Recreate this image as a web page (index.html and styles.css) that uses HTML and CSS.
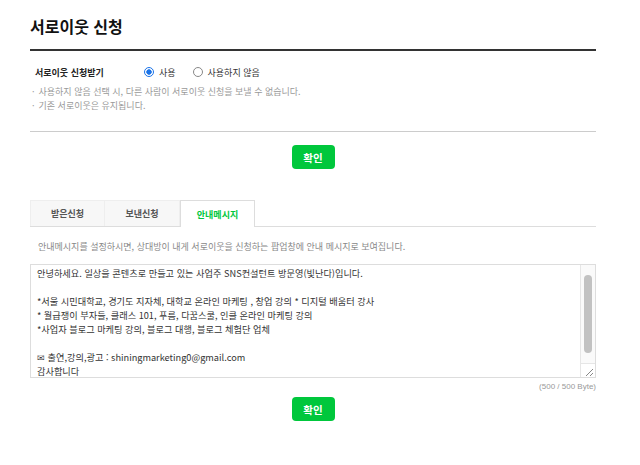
FILE: index.html
```html
<!DOCTYPE html>
<html lang="ko">
<head>
<meta charset="utf-8">
<link rel="stylesheet" href="styles.css">
</head>
<body>
<div class="page">
  <h1 class="title">서로이웃 신청</h1>
  <section class="setting">
    <div class="setting-row">
      <span class="setting-label">서로이웃 신청받기</span>
      <label class="radio"><span class="radio-dot on"></span>사용</label>
      <label class="radio"><span class="radio-dot"></span>사용하지 않음</label>
    </div>
    <ul class="notes">
      <li>사용하지 않음 선택 시, 다른 사람이 서로이웃 신청을 보낼 수 없습니다.</li>
      <li>기존 서로이웃은 유지됩니다.</li>
    </ul>
  </section>
  <div class="btn-area"><button class="btn">확인</button></div>

  <div class="tabs">
    <div class="tab">받은신청</div>
    <div class="tab">보낸신청</div>
    <div class="tab active">안내메시지</div>
  </div>
  <p class="desc">안내메시지를 설정하시면, 상대방이 내게 서로이웃을 신청하는 팝업창에 안내 메시지로 보여집니다.</p>
  <div class="message-box">
    <textarea class="message">안녕하세요. 일상을 콘텐츠로 만들고 있는 사업주 SNS컨설턴트 방문영(빛난다)입니다.

*서울 시민대학교, 경기도 지자체, 대학교 온라인 마케팅 , 창업 강의 * 디지털 배움터 강사
* 월급쟁이 부자들, 클래스 101, 푸름, 다꿈스쿨, 인클 온라인 마케팅 강의
*사업자 블로그 마케팅 강의, 블로그 대행, 블로그 체험단 업체

✉ 출연,강의,광고 : shiningmarketing0@gmail.com
감사합니다



</textarea>
    <div class="scrollbar">
      <div class="scroll-track"><div class="scroll-thumb"></div></div>
      <div class="scroll-corner">
        <svg width="14" height="14" viewBox="0 0 14 14"><path d="M12 5 L5 12 M12 9 L9 12" stroke="#888" stroke-width="1" fill="none"/></svg>
      </div>
    </div>
  </div>
  <div class="bytes">(500 / 500 Byte)</div>
  <div class="btn-area second"><button class="btn">확인</button></div>
</div>
</body>
</html>
```

FILE: styles.css
```css
* { box-sizing: border-box; }
body {
  margin: 0;
  background: #fff;
  font-family: "Noto Sans CJK KR", "Noto Sans", sans-serif;
  color: #222;
}
.page {
  width: 566px;
  margin-left: 30px;
}
.title {
  margin: 0;
  padding-top: 12px;
  height: 51px;
  font-size: 16px;
  line-height: 28px;
  font-weight: 700;
  color: #111;
  border-bottom: 2px solid #333;
}
.setting {
  padding: 13px 0 18px 5px;
  border-bottom: 1px solid #ccc;
}
.setting-row {
  display: flex;
  align-items: center;
  height: 16px;
  font-size: 9px;
}
.setting-label {
  width: 109px;
  font-weight: 700;
  color: #222;
}
.radio {
  display: flex;
  align-items: center;
  color: #333;
  margin-right: 17px;
}
.radio-dot {
  width: 10px;
  height: 10px;
  border: 1px solid #888;
  border-radius: 50%;
  margin-right: 5px;
  background: #fff;
}
.radio-dot.on {
  border: 1.5px solid #1a73e8;
  background: radial-gradient(circle, #1a73e8 0 2.4px, #fff 3px);
}
.notes {
  list-style: none;
  margin: 5px 0 0 -3px;
  padding: 0;
  font-size: 9px;
  line-height: 14px;
  color: #999;
}
.notes li::before {
  content: "·";
  margin-right: 4px;
}
.btn-area {
  display: flex;
  justify-content: center;
  padding-top: 13px;
  height: 68px;
}
.btn-area.second {
  padding-top: 3px;
}
.btn {
  width: 43px;
  height: 24px;
  border: 0;
  border-radius: 4px;
  background: #00c73c;
  color: #fff;
  font-family: inherit;
  font-size: 10.5px;
  font-weight: 700;
  padding: 0;
}
.tabs {
  display: flex;
  height: 27px;
  border-bottom: 1px solid #ddd;
}
.tab {
  width: 75px;
  height: 26px;
  background: #f7f7f7;
  border: 1px solid #eee;
  border-bottom: 0;
  display: flex;
  align-items: center;
  justify-content: center;
  font-size: 9px;
  font-weight: 700;
  color: #555;
}
.tab + .tab { border-left: 0; }
.tab.active {
  background: #fff;
  color: #00c73c;
  border: 1px solid #ddd;
  border-bottom: 0;
  height: 27px;
  margin-bottom: -1px;
}
.desc {
  margin: 0;
  padding: 12px 0 0 8px;
  height: 37px;
  font-size: 9px;
  line-height: 15px;
  color: #888;
}
.message-box {
  position: relative;
}
.message {
  display: block;
  width: 566px;
  height: 114px;
  margin: 0;
  border: 1px solid #ddd;
  padding: 1px 20px 1px 6px;
  font-family: "Noto Sans CJK KR", "Noto Sans", sans-serif;
  font-size: 9.2px;
  line-height: 14px;
  color: #333;
  resize: none;
  overflow-y: auto;
  outline: none;
}
.scrollbar {
  position: absolute;
  top: 1px;
  right: 1px;
  bottom: 1px;
  width: 15px;
  display: flex;
  flex-direction: column;
  background: #fafafa;
  border-left: 1px solid #e6e6e6;
}
.scroll-track {
  flex: 1;
  padding: 10px 3px 0 3px;
}
.scroll-thumb {
  width: 8px;
  height: 78px;
  border-radius: 4px;
  background: #c2c2c2;
}
.scroll-corner {
  height: 14px;
  border-top: 1px solid #e6e6e6;
  background: #fff;
}
.scroll-corner svg { display: block; }
.bytes {
  text-align: right;
  font-size: 8px;
  line-height: 14px;
  padding-top: 2px;
  color: #999;
  font-family: "Liberation Sans", "Noto Sans", sans-serif;
}
```
